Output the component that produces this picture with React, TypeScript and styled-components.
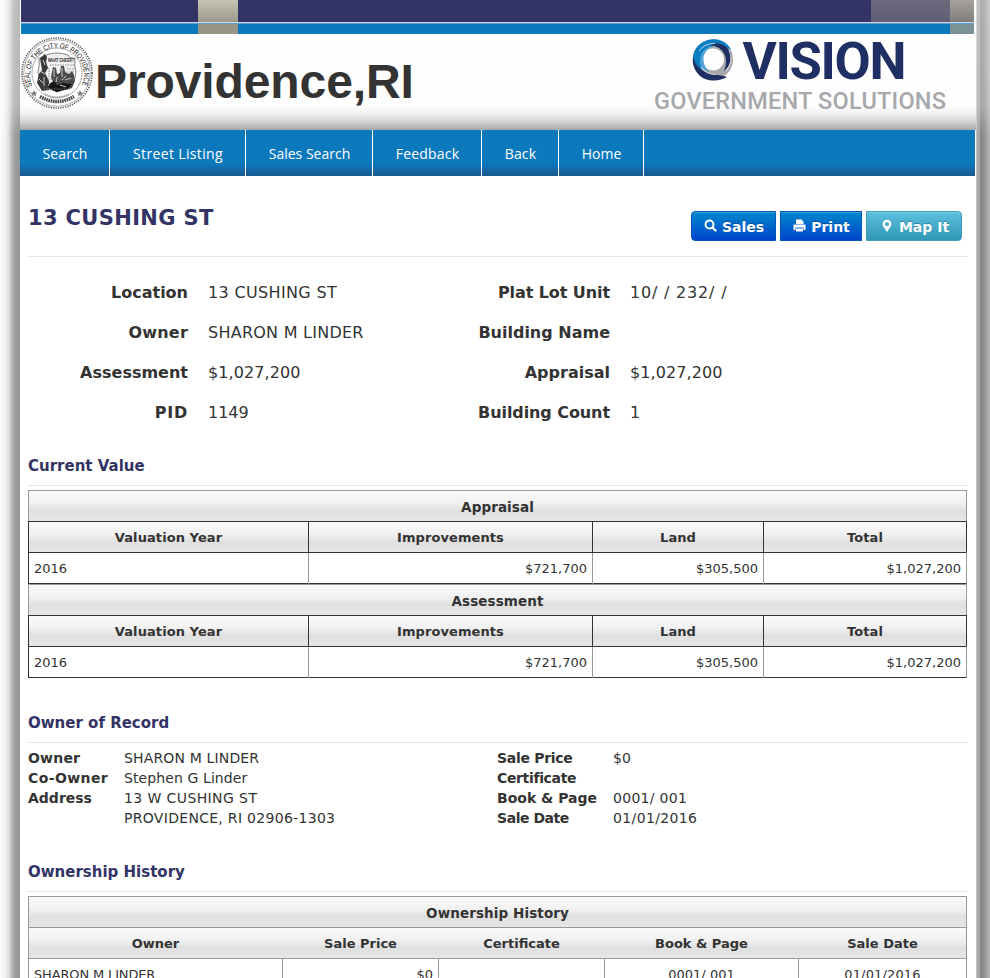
import React from "react";
import styled, { createGlobalStyle, css } from "styled-components";

const Global = createGlobalStyle`
  * { box-sizing: border-box; }
  html, body { margin: 0; padding: 0; background: #fff; height: 978px; overflow: hidden; }
  body { font-family: "DejaVu Sans", Verdana, sans-serif; color: #333; }
`;

const Frame = styled.div`
  display: grid;
  grid-template-columns: 20px 956px 14px;
  width: 990px;
  height: 978px;
  overflow: hidden;
`;
const LeftEdge = styled.div`
  background:
    linear-gradient(180deg, rgba(255,255,255,.35) 0, rgba(255,255,255,.3) 105px, rgba(255,255,255,0) 135px),
    linear-gradient(90deg, #fdfdfd 0, #f3f3f3 5px, #dcdcdc 9px, #b4b5b4 12px, #9c9f9e 15px, #939393 20px);
`;
const RightEdge = styled.div`
  background:
    linear-gradient(180deg, rgba(255,255,255,.3) 0, rgba(255,255,255,.25) 105px, rgba(255,255,255,0) 135px),
    linear-gradient(90deg, #c4c4c4 0 1px, #a8a8a8 1px 4px, #888 4px, #909090 8px, #b8b8b8 14px);
`;
const Main = styled.div`
  display: flex;
  flex-direction: column;
  min-width: 0;
  height: 978px;
  overflow: hidden;
  background: #fff;
`;

const Strip = styled.div`
  display: grid;
  grid-template-columns: 177px 40px 633px 79px 24px;
  grid-template-rows: 22px 2px 10px;
  margin: 0 2px 0 1px;
  flex: none;
`;
const StripCell = styled.div<{ $bg: string }>`
  background: ${(p) => p.$bg};
`;
const StripLine = styled.div`
  grid-column: 1 / -1;
  background: linear-gradient(#d5d5e2 50%, #5b9fcd 50%);
`;

const Header = styled.header`
  display: flex;
  align-items: flex-start;
  height: 96px;
  flex: none;
  background: linear-gradient(180deg, #fff 0, #fdfdfd 72px, #f0f0f0 80px, #d2d2d2 88px, #a6a6a6 96px);
`;
const SealArt = styled.svg`
  flex: none;
  overflow: visible;
`;
const Town = styled.h1`
  margin: 20px 0 0;
  font: bold 48px/56px "Liberation Sans", Arial, sans-serif;
  letter-spacing: -0.1px;
  color: #333;
  flex: 1;
`;
const LogoArt = styled.svg`
  flex: none;
  margin-right: 26px;
  overflow: visible;
`;

const Nav = styled.nav`
  display: flex;
  height: 46px;
  width: 955px;
  flex: none;
  background: linear-gradient(180deg, #0c79bd 0, #0c79bd 33px, #1b5a93 46px);
`;
const NavItem = styled.a<{ $w: number; $track: number }>`
  width: ${(p) => p.$w}px;
  border-right: 1px solid #fff;
  color: #fff;
  font: 14px/48px "Open Sans", "Noto Sans", sans-serif;
  letter-spacing: ${(p) => p.$track}px;
  padding-left: 1px;
  text-align: center;
  white-space: nowrap;
`;

const Content = styled.main`
  padding: 0 9px 0 8px;
`;
const TitleRow = styled.div`
  display: flex;
  justify-content: space-between;
  height: 81px;
  border-bottom: 1px solid #e5e5e5;
`;
const Title = styled.h2`
  margin: 28px 0 0;
  font-size: 21px;
  line-height: 28px;
  letter-spacing: 0.35px;
  color: #333366;
`;
const Buttons = styled.div`
  display: flex;
  gap: 4px;
  margin: 35px 5px 0 0;
`;
const Button = styled.a<{ $w: number; $info?: boolean; $radius: string }>`
  display: flex;
  align-items: center;
  justify-content: center;
  gap: 5px;
  width: ${(p) => p.$w}px;
  height: 30px;
  padding: 2px 0 0 1px;
  border-radius: ${(p) => p.$radius};
  border: 1px solid ${(p) => (p.$info ? "#3f9fba" : "#0058b8")};
  background: ${(p) =>
    p.$info ? "linear-gradient(#5bc0de, #2f96b4)" : "linear-gradient(#0088cc, #0044cc)"};
  box-shadow: inset 0 1px 0 rgba(255, 255, 255, 0.2);
  color: #fff;
  font-size: 14px;
  font-weight: bold;
  text-shadow: 0 -1px 0 rgba(0, 0, 0, 0.25);
  white-space: nowrap;
  svg { margin-top: -3px; }
`;

const Facts = styled.dl`
  display: grid;
  grid-template-columns: 160px 222px 160px 1fr;
  column-gap: 20px;
  grid-auto-rows: 40px;
  margin: 16px 0 0;
  font-size: 16px;
  line-height: 40px;
  white-space: nowrap;
`;
const Term = styled.dt<{ $track?: number; $end?: boolean }>`
  font-weight: bold;
  text-align: ${(p) => (p.$end ? "right" : "left")};
  letter-spacing: ${(p) => p.$track || 0}px;
`;
const Detail = styled.dd<{ $track?: number }>`
  margin: 0;
  letter-spacing: ${(p) => p.$track || 0}px;
`;
const Section = styled.h3<{ $top: number; $gap: number }>`
  margin: ${(p) => p.$top}px 0 ${(p) => p.$gap}px;
  height: 30px;
  border-bottom: 1px solid #e5e5e5;
  font-size: 15px;
  line-height: 20px;
  color: #333366;
`;

const Table = styled.div`
  font-size: 13px;
  line-height: 31px;
`;
const bevel = css`
  background: linear-gradient(180deg, #fafafa 0, #f1f1f1 40%, #e0e0e0 66%, #e6e6e6 100%);
  font-weight: bold;
  text-align: center;
`;
const Caption = styled.div`
  ${bevel}
  height: 31px;
  font-size: 13.5px;
  line-height: 32px;
  letter-spacing: 0.1px;
  border: solid #999;
  border-width: 1px 1px 0;
`;
const Row = styled.div<{ $cols: string; $head?: boolean; $dark?: boolean }>`
  display: grid;
  grid-template-columns: ${(p) => p.$cols};
  height: ${(p) => (p.$head ? 31 : 32)}px;
  border: 1px solid ${(p) => (p.$dark ? "#333" : "#999")};
  border-bottom-width: ${(p) => (p.$head ? 0 : 1)}px;
  border-right-color: ${(p) => (p.$dark && p.$head ? "#333" : "#999")};
  ${(p) => p.$head && bevel}
`;
const Cell = styled.div<{ $align?: string; $line?: string; $track?: number }>`
  padding: 0 5px;
  text-align: ${(p) => p.$align || "center"};
  letter-spacing: ${(p) => p.$track || 0}px;
  border-right: 1px solid ${(p) => p.$line || "#999"};
  white-space: nowrap;
  &:last-child { border-right: 0; }
`;

const Record = styled.dl`
  display: grid;
  grid-template-columns: 96px 373px 116px 1fr;
  grid-auto-rows: 20px;
  margin: 0;
  font-size: 14px;
  line-height: 20px;
  white-space: nowrap;
`;

const Seal = () => (
  <SealArt width="75" height="74" viewBox="0 0 75 74" aria-label="Seal of the City of Providence">
    <defs>
      <path id="sealRing" d="M12.300 52A27 27 0 1 1 61.700 52" fill="none" />
    </defs>
    <circle cx="37" cy="39" r="35" fill="#fff" stroke="#555" strokeWidth="1.600" strokeDasharray="1.200 1.200" />
    <circle cx="37" cy="39" r="33.300" fill="none" stroke="#888" strokeWidth=".7" />
    <circle cx="37" cy="39" r="25" fill="none" stroke="#777" strokeWidth=".8" strokeDasharray="2 .6" />
    <text fontFamily="Liberation Sans, sans-serif" fontSize="7.500" fill="#111">
      <textPath href="#sealRing" textLength="106" lengthAdjust="spacingAndGlyphs">SEAL OF THE CITY OF PROVIDENCE</textPath>
    </text>
    <path d="M20 62.500q17 10 34 0" fill="none" stroke="#444" strokeWidth="3.500" strokeDasharray="1.600 .7" />
    <path d="M25 60q12 6 24 0" fill="none" stroke="#888" strokeWidth="1.500" strokeDasharray="1 .8" />
    <path d="M14 56l1 2.400 2.500.2-2 1.500.7 2.400-2.200-1.400-2 1.400.6-2.400-2-1.500 2.500-.2zM60 56l1 2.400 2.500.2-2 1.500.7 2.400-2.200-1.400-2 1.400.6-2.400-2-1.500 2.500-.2z" fill="#777" />
    <path d="M19 24q5 1 7-3 11-4 22 0 2 4 7 3-1 8 1 14 0 14-19 20-19-6-19-20 2-6 1-14z" fill="#f0f0f0" stroke="#666" strokeWidth=".8" />
    <path d="M20 24l5-4 2 3-1 5 2 6-3 5 4 8v9l-7 1-5-8 2-9 3-4z" fill="#3a3a3a" />
    <text x="41" y="27.500" textAnchor="middle" fontFamily="Liberation Sans, sans-serif" fontWeight="bold" fontSize="4.600" fill="#222" textLength="26" lengthAdjust="spacingAndGlyphs">WHAT CHEER?</text>
    <path d="M31 43l2-10 3 1 1 6 3-1 1-7 3 0 1 6 4 2 3-3 2 4 1 6-3 7-7 2-10-3z" fill="#4a4a4a" />
    <path d="M27 51l7-4 3 4 6-2 9 1-4 5-11 3-7-3z" fill="#151515" />
    <path d="M23 26l2 5M20 37l5 3M24 43v9M19 45l4 4M34 35v8M37 43l-1 5M42 34v9M46 42l-4 4M51 44l-6 2M40 51l6 2M31 47l-3 5" stroke="#ddd" strokeWidth=".9" />
    <path d="M30 31h24M47 35h8M45 38h9M29 34v9M28 45h26M24 55h26" stroke="#777" strokeWidth=".8" strokeDasharray="1.500 1" />
  </SealArt>
);

const VisionLogo = () => (
  <LogoArt width="300" height="80" viewBox="650 34 300 80" aria-label="Vision Government Solutions">
    <circle cx="713" cy="59.500" r="15.500" fill="none" stroke="#a6a8ab" strokeWidth="9" />
    <path d="M693 60C692 45 708 36 721 40.500C727 43 730 47 731 50C722 42 707 44 702 55C699 62 701 69 705 74C697 71 693 66 693 60z" fill="#0d7dc1" />
    <path d="M693 57C695 66 704 74 714 74.500C719 75 724 76 727 77C719 82 706 82 699 75C694 70 692 63 693 57z" fill="#1f2f63" />
    <path d="M710 45C719 41 728 46 730.500 53C732 61 729 67 724 71C727 64 727 56 722 50.500C719 47 714 45.500 710 45z" fill="#1f2f63" />
    <path d="M701 66C698 56 703 47 713 46C705 50 702 56 704 63C705 68 708 70 710 72C706 71 702 69 701 66z" fill="#50a4d8" />
    <path d="M699 51Q705 43 715 43.500M701 67Q707 75 716 74.500M729 50Q734 62 726 71" fill="none" stroke="#fff" strokeWidth=".7" />
    <text x="742.500" y="79" fontFamily="Roboto, sans-serif" fontWeight="bold" fontSize="52.500" fill="#1f2f63" textLength="164">VISION</text>
    <text x="654" y="108.500" fontFamily="Roboto, sans-serif" fontWeight="500" fontSize="23.500" fill="#a6a8ab" textLength="292">GOVERNMENT SOLUTIONS</text>
  </LogoArt>
);

const SearchIcon = () => (
  <svg width="13" height="14" viewBox="0 0 13 14">
    <circle cx="5.500" cy="5.500" r="4" fill="none" stroke="#fff" strokeWidth="1.900" />
    <path d="M8.500 8.500L11.500 11.500" stroke="#fff" strokeWidth="2.400" strokeLinecap="round" />
  </svg>
);
const PrintIcon = () => (
  <svg width="13" height="14" viewBox="0 0 13 14">
    <path d="M3 5V.5h5.500L10.500 2.500V5zM.5 5.500h12V11h-2V8.500h-8V11h-2zM3 9.500h7v3H3z" fill="#fff" />
  </svg>
);
const PinIcon = () => (
  <svg width="14" height="14" viewBox="0 0 14 14">
    <path fillRule="evenodd" d="M7 .8a4.400 4.400 0 0 0-4.400 4.400C2.600 7.300 5.200 9.600 7 13c1.800-3.400 4.400-5.700 4.400-7.800A4.400 4.400 0 0 0 7 .8zM7 3a2.100 2.100 0 1 1 0 4.200A2.100 2.100 0 0 1 7 3z" fill="#fff" />
  </svg>
);

const navItems: [string, number, number][] = [
  ["Search", 90, 0.1],
  ["Street Listing", 136, 0.35],
  ["Sales Search", 127, 0],
  ["Feedback", 109, 0.2],
  ["Back", 77, 0.1],
  ["Home", 85, 0],
];
// label, value, label tracking, value tracking
type Entry = [string, string, number, number];
const facts: Entry[] = [
  ["Location", "13 CUSHING ST", 0, 0.35],
  ["Plat Lot Unit", "10/ / 232/ /", -0.08, 0.8],
  ["Owner", "SHARON M LINDER", 0.2, 0.25],
  ["Building Name", "", 0, 0],
  ["Assessment", "$1,027,200", 0, 0.1],
  ["Appraisal", "$1,027,200", 0, 0.1],
  ["PID", "1149", 0.8, 0],
  ["Building Count", "1", -0.08, 0],
];
const record: Entry[] = [
  ["Owner", "SHARON M LINDER", 0.2, 0.15],
  ["Sale Price", "$0", -0.3, 0],
  ["Co-Owner", "Stephen G Linder", 0.4, 0.1],
  ["Certificate", "", -0.35, 0],
  ["Address", "13 W CUSHING ST", 0, 0.4],
  ["Book & Page", "0001/ 001", 0, 0.3],
  ["", "PROVIDENCE, RI 02906-1303", 0, 0.3],
  ["Sale Date", "01/01/2016", -0.45, 0.37],
];
const valueCols = "280px 284px 171px 1fr";
const historyCols = "254px 156px 166px 194px 1fr";

const ValueTable = ({ caption }: { caption: string }) => (
  <Table>
    <Caption>{caption}</Caption>
    <Row $cols={valueCols} $head $dark>
      {["Valuation Year", "Improvements", "Land", "Total"].map((h) => (
        <Cell key={h} $line="#333" $track={0.08}>{h}</Cell>
      ))}
    </Row>
    <Row $cols={valueCols} $dark>
      <Cell $align="left">2016</Cell>
      <Cell $align="right">$721,700</Cell>
      <Cell $align="right">$305,500</Cell>
      <Cell $align="right">$1,027,200</Cell>
    </Row>
  </Table>
);

export default function App() {
  return (
    <>
      <Global />
      <Frame>
        <LeftEdge />
        <Main>
          <Strip>
            <StripCell $bg="#333366" />
            <StripCell $bg="linear-gradient(#c8c4b4, #9b988a)" />
            <StripCell $bg="#333366" />
            <StripCell $bg="linear-gradient(#6c6a7c, #615f76)" />
            <StripCell $bg="linear-gradient(#a5a29f, #7f7d7b)" />
            <StripLine />
            <StripCell $bg="#0c79bd" />
            <StripCell $bg="#989586" />
            <StripCell $bg="#0c79bd" />
            <StripCell $bg="#0c79bd" />
            <StripCell $bg="#7a9295" />
          </Strip>
          <Header>
            <Seal />
            <Town>Providence,RI</Town>
            <VisionLogo />
          </Header>
          <Nav>
            {navItems.map(([label, w, track]) => (
              <NavItem key={label} $w={w} $track={track}>{label}</NavItem>
            ))}
          </Nav>
          <Content>
            <TitleRow>
              <Title>13 CUSHING ST</Title>
              <Buttons>
                <Button $w={85} $radius="4px 0 0 4px"><SearchIcon />Sales</Button>
                <Button $w={82} $radius="0"><PrintIcon />Print</Button>
                <Button $w={96} $radius="0 4px 4px 0" $info><PinIcon />Map It</Button>
              </Buttons>
            </TitleRow>
            <Facts>
              {facts.map(([k, v, kt, vt]) => (
                <React.Fragment key={k}>
                  <Term $end $track={kt}>{k}</Term>
                  <Detail $track={vt}>{v}</Detail>
                </React.Fragment>
              ))}
            </Facts>
            <Section $top={23} $gap={4}>Current Value</Section>
            <ValueTable caption="Appraisal" />
            <ValueTable caption="Assessment" />
            <Section $top={35} $gap={5}>Owner of Record</Section>
            <Record>
              {record.map(([k, v, kt, vt], i) => (
                <React.Fragment key={i}>
                  <Term $track={kt}>{k}</Term>
                  <Detail $track={vt}>{v}</Detail>
                </React.Fragment>
              ))}
            </Record>
            <Section $top={34} $gap={4}>Ownership History</Section>
            <Table>
              <Caption>Ownership History</Caption>
              <Row $cols={historyCols} $head>
                {["Owner", "Sale Price", "Certificate", "Book & Page", "Sale Date"].map((h) => (
                  <Cell key={h} $line="transparent">{h}</Cell>
                ))}
              </Row>
              <Row $cols={historyCols}>
                <Cell $align="left" $track={-0.15}>SHARON M LINDER</Cell>
                <Cell $align="right">$0</Cell>
                <Cell />
                <Cell>0001/ 001</Cell>
                <Cell $track={0.15}>01/01/2016</Cell>
              </Row>
            </Table>
          </Content>
        </Main>
        <RightEdge />
      </Frame>
    </>
  );
}
